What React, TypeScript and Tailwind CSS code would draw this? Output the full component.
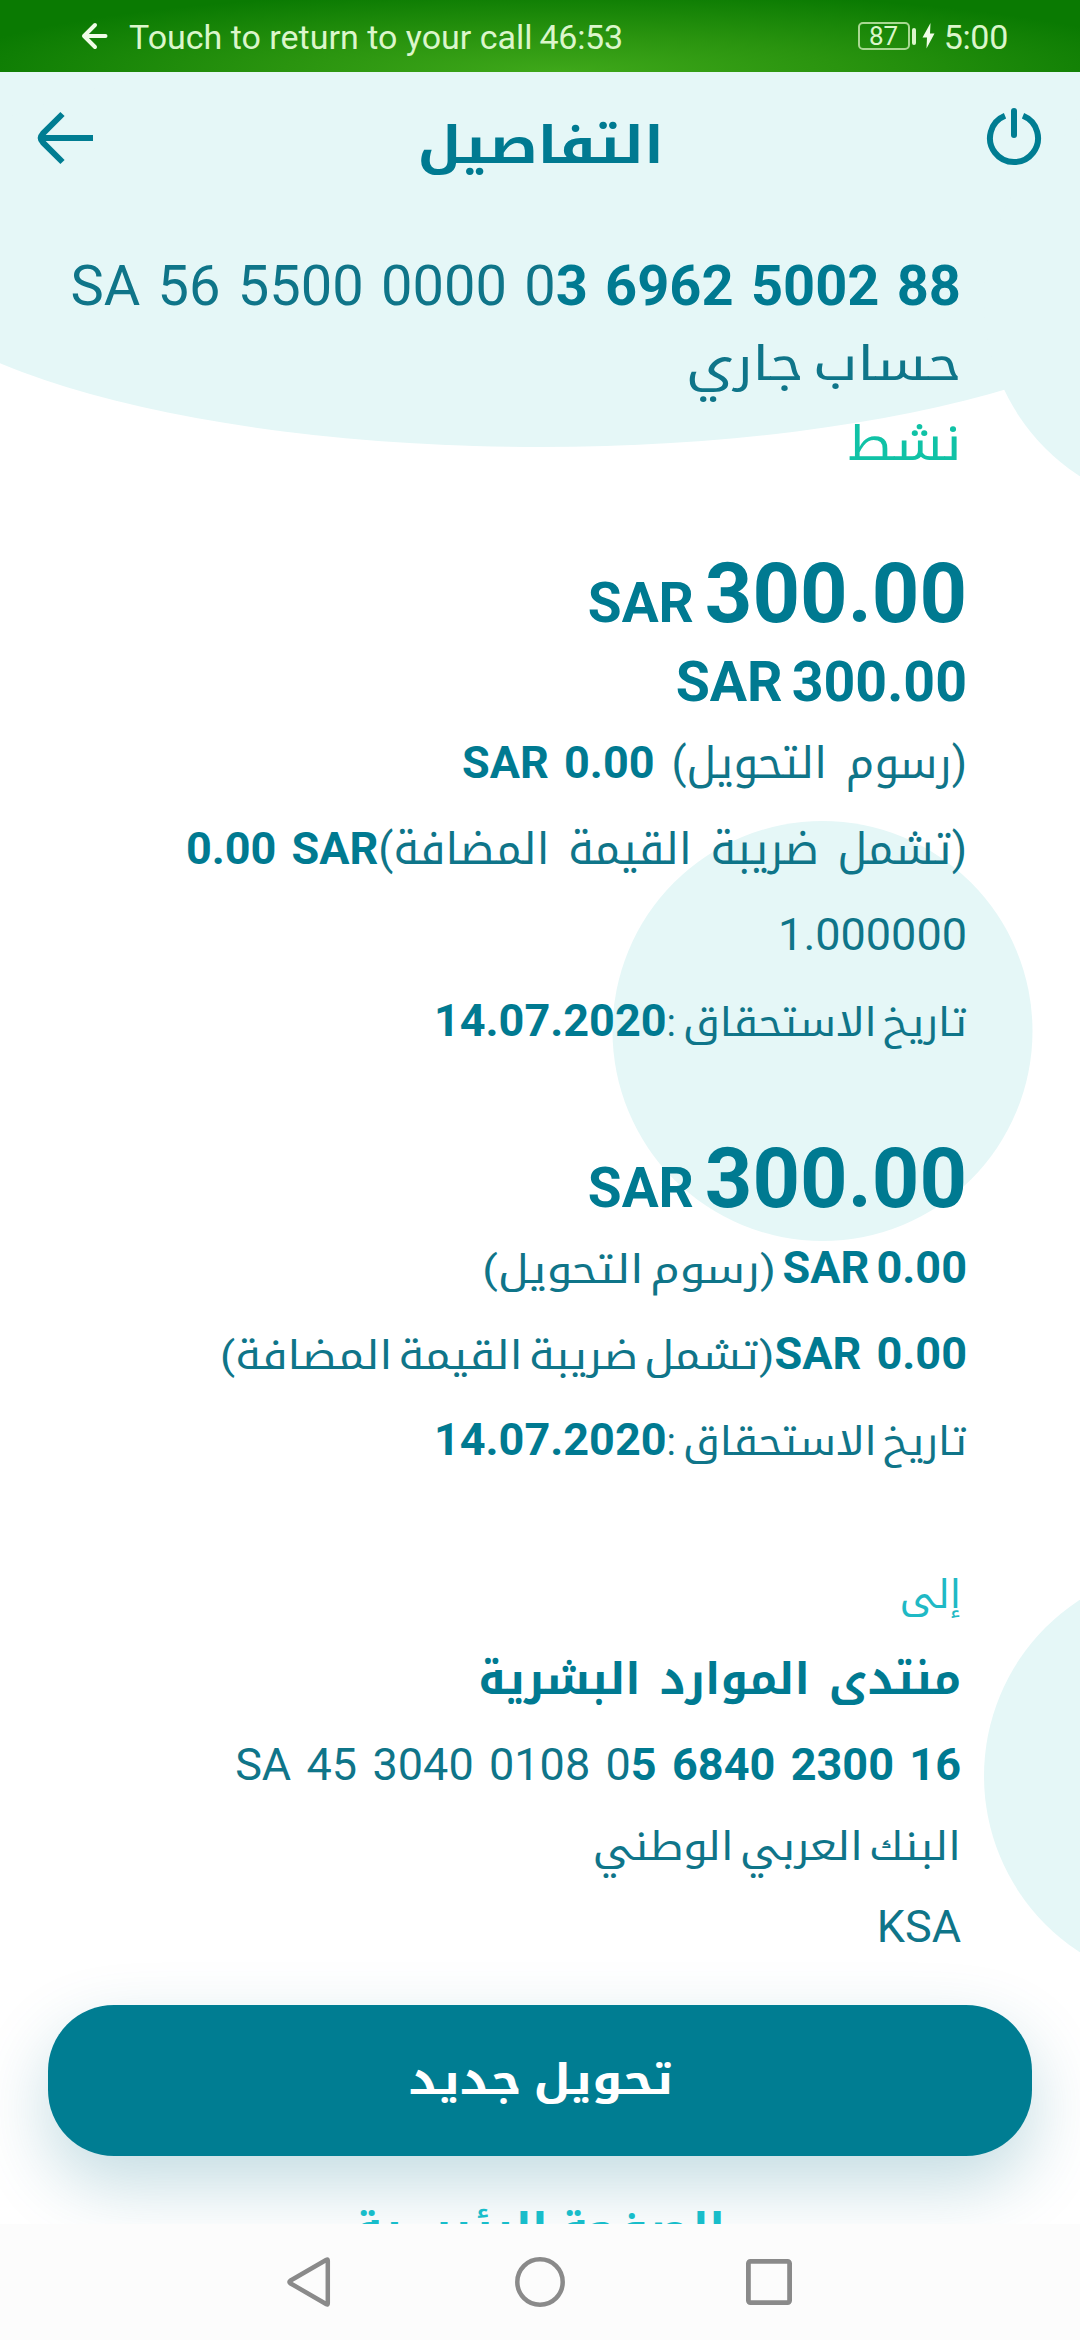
import type { ReactNode } from "react";

// Arabic label. The outer box keeps the label's final width in the row,
// the inner one carries the horizontal stretch.
function Ar({ box, text, children }: { box: string; text: string; children: ReactNode }) {
  return (
    <span dir="rtl" className={`inline-flex justify-start whitespace-nowrap ${box}`}>
      <span className={`inline-block origin-right ${text}`}>{children}</span>
    </span>
  );
}

function StatusBar() {
  return (
    <div className="flex h-[72px] items-center bg-[radial-gradient(ellipse_620px_82px_at_52%_100%,#3fa81a_0%,#2a940f_45%,#0a7a02_100%)] pl-[81px] pr-[72px] text-[34px] leading-[72px] text-[#dbf6cb]">
      <svg width="28" height="28" viewBox="0 0 28 28" fill="none" stroke="#f1fde8" strokeWidth="4" strokeLinecap="round" strokeLinejoin="round">
        <path d="M14 3 L3 14 L14 25 M3 14 H24.5" />
      </svg>
      <span className="ml-5 whitespace-pre pt-px">Touch to return to your call</span>
      <span className="ml-[7px] pt-px tracking-[-0.3px]">46:53</span>
      <div className="ml-auto flex items-center">
        <span className="flex h-[28px] w-[52px] items-center justify-center rounded-[5px] border-2 border-[#a9d892] text-[26px] leading-none">
          87
        </span>
        <span className="ml-0.5 h-[17px] w-1 rounded-full bg-[#dbf6cb]" />
        <svg className="ml-1.5" width="13" height="26" viewBox="0 0 13 26" fill="#f1fde8">
          <path d="M8.5 0 L0.5 14.5 H5 L4.5 25.5 L12.5 10.5 H8 Z" />
        </svg>
        <span className="ml-[9px] pt-px tracking-[-0.3px]">5:00</span>
      </div>
    </div>
  );
}

function Header() {
  return (
    <header className="flex h-[132px] items-center justify-between pl-[37px] pr-9">
      <button type="button">
        <svg width="58" height="58" viewBox="0 0 58 58" fill="none" stroke="#007d92" strokeWidth="6">
          <path d="M25.5 5 L5.8 24.7 Q1.8 29 5.8 33.3 L25.5 53 M4 29 H56" />
        </svg>
      </button>
      <h1 className="flex pl-[5px] pt-4 text-[51px] font-bold leading-[84px] text-[#007a91]">
        <Ar box="w-[243px]" text="scale-x-[1.12]">
          التفاصيل
        </Ar>
      </h1>
      <button type="button">
        <svg width="60" height="60" viewBox="0 0 60 60" fill="none" stroke="#007d92" strokeWidth="6">
          <path d="M21 7.8 A24 24 0 1 0 39 7.8" />
          <path d="M30 3 V27" strokeLinecap="round" />
        </svg>
      </button>
    </header>
  );
}

function DueDate() {
  return (
    <div className="flex h-[86px] items-baseline justify-end text-[45px] leading-[86px]">
      <b>14.07.2020</b>
      <span className="mr-2.5 text-[39px] text-[#0f7589]">:</span>
      <Ar box="w-[281px] text-[39px] text-[#0f7589] [word-spacing:-4px]" text="scale-x-[1.08]">
        تاريخ الاستحقاق
      </Ar>
    </div>
  );
}

export default function App() {
  return (
    <div className="flex h-[2340px] w-[1080px] flex-col overflow-hidden bg-white font-['Roboto','Noto_Kufi_Arabic',sans-serif] text-[#007a91]">
      <StatusBar />

      <main className="relative h-[2152px] overflow-hidden">
        {/* pale background shapes */}
        <svg className="absolute left-0 top-0" width="1080" height="2152" viewBox="0 72 1080 2152" fill="#e5f7f7">
          <rect x="0" y="72" width="1080" height="171" />
          <ellipse cx="540" cy="242" rx="670" ry="205" />
          <circle cx="1194" cy="300" r="210" />
          <circle cx="822.5" cy="1031" r="210" />
          <circle cx="1194" cy="1776" r="210" />
        </svg>

        <div className="relative">
          <Header />

          <section className="mt-[45px] flex flex-col pr-[119px]">
            <div className="flex h-[75px] items-baseline justify-end whitespace-pre text-[56px] leading-[75px] [word-spacing:3.4px]">
              <span className="text-[#0f7589]">SA 56 5500 0000 0</span>
              <b>3 6962 5002 88</b>
            </div>
            <div className="flex h-20 items-baseline justify-end text-[48px] leading-[80px] text-[#0f7589]">
              <Ar box="w-[274px] [word-spacing:-4px]" text="scale-x-[1.19]">
                حساب جاري
              </Ar>
            </div>
            <div className="flex h-20 items-baseline justify-end text-[48px] leading-[80px] text-[#10c2a6]">
              <Ar box="w-[112px]" text="scale-x-[1.14]">
                نشط
              </Ar>
            </div>
          </section>

          <section className="mt-[58px] flex flex-col pr-[113px]">
            <div className="flex h-[104px] items-baseline justify-end gap-[11px] text-[83px] font-bold leading-[104px]">
              <span className="text-[55px]">SAR</span>
              <span>300.00</span>
            </div>
            <div className="flex h-[74px] items-baseline justify-end gap-[9px] text-[55.5px] font-bold leading-[74px]">
              <span>SAR</span>
              <span>300.00</span>
            </div>
            <div className="flex h-[86px] items-baseline justify-end gap-[17px] text-[45px] leading-[86px]">
              <b className="[word-spacing:4px]">SAR 0.00</b>
              <Ar box="text-[44px] text-[#0f7589] [word-spacing:8px]" text="">
                (رسوم التحويل)
              </Ar>
            </div>
            <div className="flex h-[86px] items-baseline justify-end text-[45px] leading-[86px]">
              <b className="[word-spacing:4px]">0.00 SAR</b>
              <Ar box="text-[44px] text-[#0f7589] [word-spacing:8px]" text="">
                (تشمل ضريبة القيمة المضافة)
              </Ar>
            </div>
            <div className="h-[86px] text-right text-[45px] leading-[86px] text-[#0f7589]">1.000000</div>
            <DueDate />
          </section>

          <section className="mt-[69px] flex flex-col pr-[113px]">
            <div className="flex h-[92px] items-baseline justify-end gap-[11px] text-[83px] font-bold leading-[92px]">
              <span className="text-[55px]">SAR</span>
              <span>300.00</span>
            </div>
            <div className="flex h-[86px] items-baseline justify-end gap-[7px] text-[45px] leading-[86px]">
              <Ar box="w-[290px] text-[39px] text-[#0f7589] [word-spacing:-4px]" text="scale-x-[1.17]">
                (رسوم التحويل)
              </Ar>
              <b className="[word-spacing:-4px]">SAR 0.00</b>
            </div>
            <div className="flex h-[86px] items-baseline justify-end text-[45px] leading-[86px]">
              <Ar box="w-[553px] text-[39px] text-[#0f7589] [word-spacing:-4px]" text="scale-x-[1.135]">
                (تشمل ضريبة القيمة المضافة)
              </Ar>
              <b className="[word-spacing:4px]">SAR 0.00</b>
            </div>
            <DueDate />
          </section>

          <section className="mt-[71px] flex flex-col pr-[119px] text-[45px]">
            <div className="flex h-[82px] items-baseline justify-end leading-[82px]">
              <Ar box="w-[62px] text-[39px] text-[#1fb9c5]" text="">
                إلى
              </Ar>
            </div>
            <div className="flex h-[86px] items-baseline justify-end leading-[86px]">
              <Ar box="text-[44px] font-bold [word-spacing:8px]" text="">
                منتدى الموارد البشرية
              </Ar>
            </div>
            <div className="flex h-[86px] items-baseline justify-end whitespace-pre leading-[86px] [word-spacing:4.2px]">
              <span className="text-[#0f7589]">SA 45 3040 0108 0</span>
              <b>5 6840 2300 16</b>
            </div>
            <div className="flex h-[78px] items-baseline justify-end leading-[78px]">
              <Ar box="w-[366px] text-[39px] text-[#0f7589] [word-spacing:-4px]" text="scale-x-[1.116]">
                البنك العربي الوطني
              </Ar>
            </div>
            <div className="h-[82px] text-right leading-[82px] text-[#0f7589]">KSA</div>
          </section>

          <div className="mt-[37px] flex flex-col items-center px-12">
            <button
              type="button"
              className="flex h-[151px] w-full items-center justify-center rounded-[66px] bg-[#007d92] pb-0.5 text-[42px] font-bold text-white shadow-[0_28px_70px_rgba(0,110,135,0.24)]"
            >
              <Ar box="w-[266px]" text="scale-x-[1.155]">
                تحويل جديد
              </Ar>
            </button>
            <a className="mt-[33px] flex h-20 text-[42px] font-bold leading-[80px] text-[#18bdca]">
              <Ar box="w-[371px]" text="scale-x-[1.105]">
                الصفحة الرئيسية
              </Ar>
            </a>
          </div>
        </div>
      </main>

      {/* Android navigation keys */}
      <nav className="relative flex h-[116px] items-center bg-[#fcfcfc] pl-[285px]">
        <svg width="48" height="54" viewBox="0 0 48 54" fill="none" stroke="#8a8a8a" strokeWidth="4.5" strokeLinejoin="round">
          <path d="M41.5 4.8 Q42.8 4 42.8 5.5 V48.5 Q42.8 50 41.5 49.2 L5.2 28.2 Q3.6 27 5.2 25.8 Z" />
        </svg>
        <svg className="ml-[180px]" width="54" height="54" viewBox="0 0 54 54" fill="none" stroke="#8a8a8a" strokeWidth="4.5">
          <circle cx="27" cy="27" r="22.7" />
        </svg>
        <svg className="ml-[175px]" width="54" height="54" viewBox="0 0 54 54" fill="none" stroke="#8a8a8a" strokeWidth="4.8">
          <rect x="6.4" y="6.4" width="41.2" height="41.2" rx="2" />
        </svg>
      </nav>
    </div>
  );
}
